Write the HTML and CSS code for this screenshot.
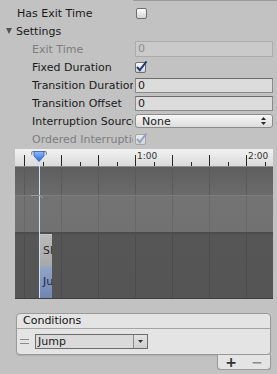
FILE: index.html
```html
<!DOCTYPE html>
<html lang="en">
<head>
    <meta charset="UTF-8">
    <title>Transition Inspector</title>
    <link rel="stylesheet" href="styles.css">
</head>
<body>
    <div class="topline"></div>
    <div class="row top">
        <span class="label">Has Exit Time</span>
        <span class="check"></span>
    </div>
    <div class="row top">
        <span class="fold"></span>Settings
    </div>
    <div class="row sub">
        <span class="label muted">Exit Time</span>
        <span class="field disabled">0</span>
    </div>
    <div class="row sub">
        <span class="label">Fixed Duration</span>
        <span class="check">
            <svg width="13" height="12" viewBox="0 0 13 12"><path d="M2 6 L4.8 9.2 L11.5 0.5" fill="none" stroke="#1c3c7c" stroke-width="2"/></svg>
        </span>
    </div>
    <div class="row sub">
        <span class="label">Transition Duration</span>
        <span class="field">0</span>
    </div>
    <div class="row sub">
        <span class="label">Transition Offset</span>
        <span class="field">0</span>
    </div>
    <div class="row sub">
        <span class="label">Interruption Source</span>
        <span class="popup">
            None
            <svg width="5" height="8" viewBox="0 0 5 8"><path d="M0 3 L2.5 0 L5 3 Z M0 5 L2.5 8 L5 5 Z" fill="#2a2a2a"/></svg>
        </span>
    </div>
    <div class="row sub">
        <span class="label muted">Ordered Interruption</span>
        <span class="check off">
            <svg width="13" height="12" viewBox="0 0 13 12"><path d="M2 6 L4.8 9.2 L11.5 0.5" fill="none" stroke="#8ea4c8" stroke-width="2"/></svg>
        </span>
    </div>

    <div class="timeline">
        <div class="ruler">
            <span class="cell"></span>
            <span class="cell"></span>
            <span class="cell"></span>
            <span class="cell">1:00</span>
            <span class="cell"></span>
            <span class="cell"></span>
            <span class="cell">2:00</span>
        </div>
        <div class="band band-a"></div>
        <div class="band band-b"></div>
        <div class="band band-c">
            <div class="clip src">Sh</div>
            <div class="clip dst">Ju</div>
        </div>
        <div class="playhead"></div>
        <svg class="marker" width="18" height="13" viewBox="0 0 18 13">
            <defs>
                <linearGradient id="mk" x1="0" y1="0" x2="0" y2="1">
                    <stop offset="0" stop-color="#8cbcff"/>
                    <stop offset="1" stop-color="#2a66d8"/>
                </linearGradient>
            </defs>
            <path d="M2 5 C0.5 2 3 0.5 5 2 M16 5 C17.5 2 15 0.5 13 2" fill="none" stroke="#8a8a8a" stroke-width="1.2"/>
            <path d="M4 1.5 H14 V6 L9 11.5 L4 6 Z" fill="url(#mk)" stroke="#2a58b0" stroke-width="0.8"/>
        </svg>
        <svg class="tmark" width="14" height="5" viewBox="0 0 14 5">
            <path d="M0 1.5 H9 L12 4" fill="none" stroke="#9c9c9c" stroke-width="1"/>
        </svg>
    </div>

    <div class="conditions">
        <div class="cond-box">
            <div class="cond-head">Conditions</div>
            <div class="cond-row">
                <span class="handle"></span>
                <span class="dropdown">
                    <span class="dd-text">Jump</span>
                    <span class="dd-btn">
                        <svg width="5" height="3" viewBox="0 0 5 3"><path d="M0 0 H5 L2.5 3 Z" fill="#333"/></svg>
                    </span>
                </span>
            </div>
        </div>
        <div class="cond-foot">
            <div class="buttons">
                <span class="plus">+</span>
                <span class="minus">&minus;</span>
            </div>
        </div>
    </div>
</body>
</html>
```

FILE: styles.css
```css
body {
    margin: 0;
    background: #c2c2c2;
    font-family: "DejaVu Sans", sans-serif;
    font-size: 11px;
    color: #1a1a1a;
    overflow: hidden;
}
.topline {
    height: 1px;
    margin-left: 133px;
    margin-bottom: 3px;
    background: #9a9a9a;
}
.row {
    display: flex;
    align-items: center;
    height: 18px;
    white-space: nowrap;
}
.row.top {
    padding-left: 17px;
}
.row.sub {
    padding-left: 32px;
}
.label {
    flex: none;
    overflow: hidden;
}
.row.top .label {
    width: 119px;
}
.row.sub .label {
    width: 101px;
    margin-right: 2px;
}
.muted {
    color: #7e7e7e;
}
.fold {
    width: 0;
    height: 0;
    margin-left: -11px;
    margin-right: 4px;
    border-left: 3.5px solid transparent;
    border-right: 3.5px solid transparent;
    border-top: 6px solid #545454;
}
.check {
    flex: none;
    position: relative;
    width: 11px;
    height: 11px;
    box-sizing: border-box;
    border: 1px solid #6e6e6e;
    border-radius: 2px;
    background: linear-gradient(#fdfdfd, #d4d4d4);
}
.check svg {
    position: absolute;
    left: -1px;
    top: -2px;
}
.check.off {
    border-color: #a4a4a4;
    background: linear-gradient(#ececec, #d4d4d4);
}
.field {
    flex: 1;
    margin-right: 4px;
    height: 15px;
    box-sizing: border-box;
    border: 1px solid #8a8a8a;
    border-top-color: #6c6c6c;
    background: #dcdcdc;
    padding-left: 2px;
    line-height: 13px;
}
.field.disabled {
    height: 16px;
    line-height: 14px;
    border-color: #acacac;
    background: #cacaca;
    color: #8c8c8c;
}
.popup {
    flex: 1;
    margin-right: 4px;
    height: 14px;
    box-sizing: border-box;
    border: 1px solid #8c8c8c;
    border-radius: 3px;
    background: linear-gradient(#f7f7f7, #dcdcdc);
    display: flex;
    align-items: center;
    justify-content: space-between;
    padding: 0 6px;
}
.timeline {
    position: relative;
    margin: 1px 4px 0 15px;
    border-bottom: 1px solid #3e3e3e;
}
.ruler {
    display: flex;
    height: 17px;
    padding-left: 9px;
    border-bottom: 1px solid #8e8e8e;
    background-image:
        linear-gradient(to right, #262626 1px, transparent 1px),
        linear-gradient(to right, #262626 1px, transparent 1px),
        linear-gradient(#f2f2f2, #dadada);
    background-size: 37px 11px, 37px 4px, 100% 100%;
    background-position: 9px 100%, 28px 100%, 0 0;
    background-repeat: repeat-x, repeat-x, no-repeat;
}
.cell {
    flex: none;
    width: 37px;
    padding: 3px 0 0 2px;
    box-sizing: border-box;
    font-size: 9px;
    line-height: 9px;
    color: #333;
}
.band {
    background-repeat: repeat-x, no-repeat;
    background-position: 9px 0, 0 0;
    background-size: 37px 100%, 100% 100%;
}
.band-a {
    height: 28px;
    border-bottom: 1px solid #7c7c7c;
    background-image:
        linear-gradient(to right, #5a5a5a 1px, transparent 1px),
        linear-gradient(#5e5e5e, #6b6b6b);
}
.band-b {
    height: 36px;
    background-image:
        linear-gradient(to right, #676767 1px, transparent 1px),
        linear-gradient(#737373, #717171);
}
.band-c {
    height: 66px;
    box-sizing: border-box;
    padding: 2px 0 0 25px;
    background-image:
        linear-gradient(to right, #4c4c4c 1px, transparent 1px),
        linear-gradient(#4a4a4a, #565656 4px, #555555);
}
.clip {
    width: 12px;
    height: 32px;
    box-sizing: border-box;
    padding-left: 3px;
    line-height: 32px;
    overflow: hidden;
    white-space: nowrap;
}
.clip.src {
    background: linear-gradient(#bababa, #a8a8a8);
    border-top: 1px solid #c6c6c6;
    color: #2a2a2a;
}
.clip.dst {
    background: linear-gradient(#93a6c8, #6f86b2);
    color: #1a2846;
}
.playhead {
    position: absolute;
    left: 24px;
    top: 11px;
    bottom: 0;
    width: 1px;
    background: #d4e0f4;
}
.marker {
    position: absolute;
    left: 15px;
    top: 1px;
}
.tmark {
    position: absolute;
    left: 16px;
    top: 45px;
}
.conditions {
    margin: 14px 6px 0 16px;
}
.cond-box {
    border: 1px solid #9a9a9a;
    border-radius: 4px;
    background: #e4e4e4;
    box-shadow: 0 1px 1px rgba(0, 0, 0, 0.12);
}
.cond-head {
    height: 14px;
    line-height: 14px;
    padding-left: 6px;
    border-bottom: 1px solid #a4a4a4;
    color: #111;
}
.cond-row {
    display: flex;
    align-items: center;
    height: 25px;
    padding-left: 3px;
}
.handle {
    width: 9px;
    height: 4px;
    margin-right: 6px;
    border-top: 1px solid #8a8a8a;
    border-bottom: 1px solid #8a8a8a;
    box-sizing: border-box;
    height: 5px;
}
.dropdown {
    display: flex;
    width: 113px;
    height: 15px;
    box-sizing: border-box;
    border: 1px solid #6c6c6c;
    background: #dadada;
}
.dd-text {
    flex: 1;
    padding-left: 2px;
    line-height: 13px;
}
.dd-btn {
    width: 13px;
    border-left: 1px solid #8c8c8c;
    background: linear-gradient(#e2e2e2, #cfcfcf);
    display: flex;
    align-items: center;
    justify-content: center;
}
.cond-foot {
    display: flex;
    justify-content: flex-end;
}
.buttons {
    display: flex;
    align-items: center;
    justify-content: space-around;
    width: 54px;
    height: 15px;
    box-sizing: border-box;
    border: 1px solid #9a9a9a;
    border-top: none;
    border-radius: 0 0 4px 4px;
    background: #e4e4e4;
    box-shadow: 0 1px 1px rgba(0, 0, 0, 0.12);
    font-size: 14px;
    font-weight: bold;
    line-height: 14px;
}
.plus {
    color: #333;
}
.minus {
    color: #8c8c8c;
}
```
